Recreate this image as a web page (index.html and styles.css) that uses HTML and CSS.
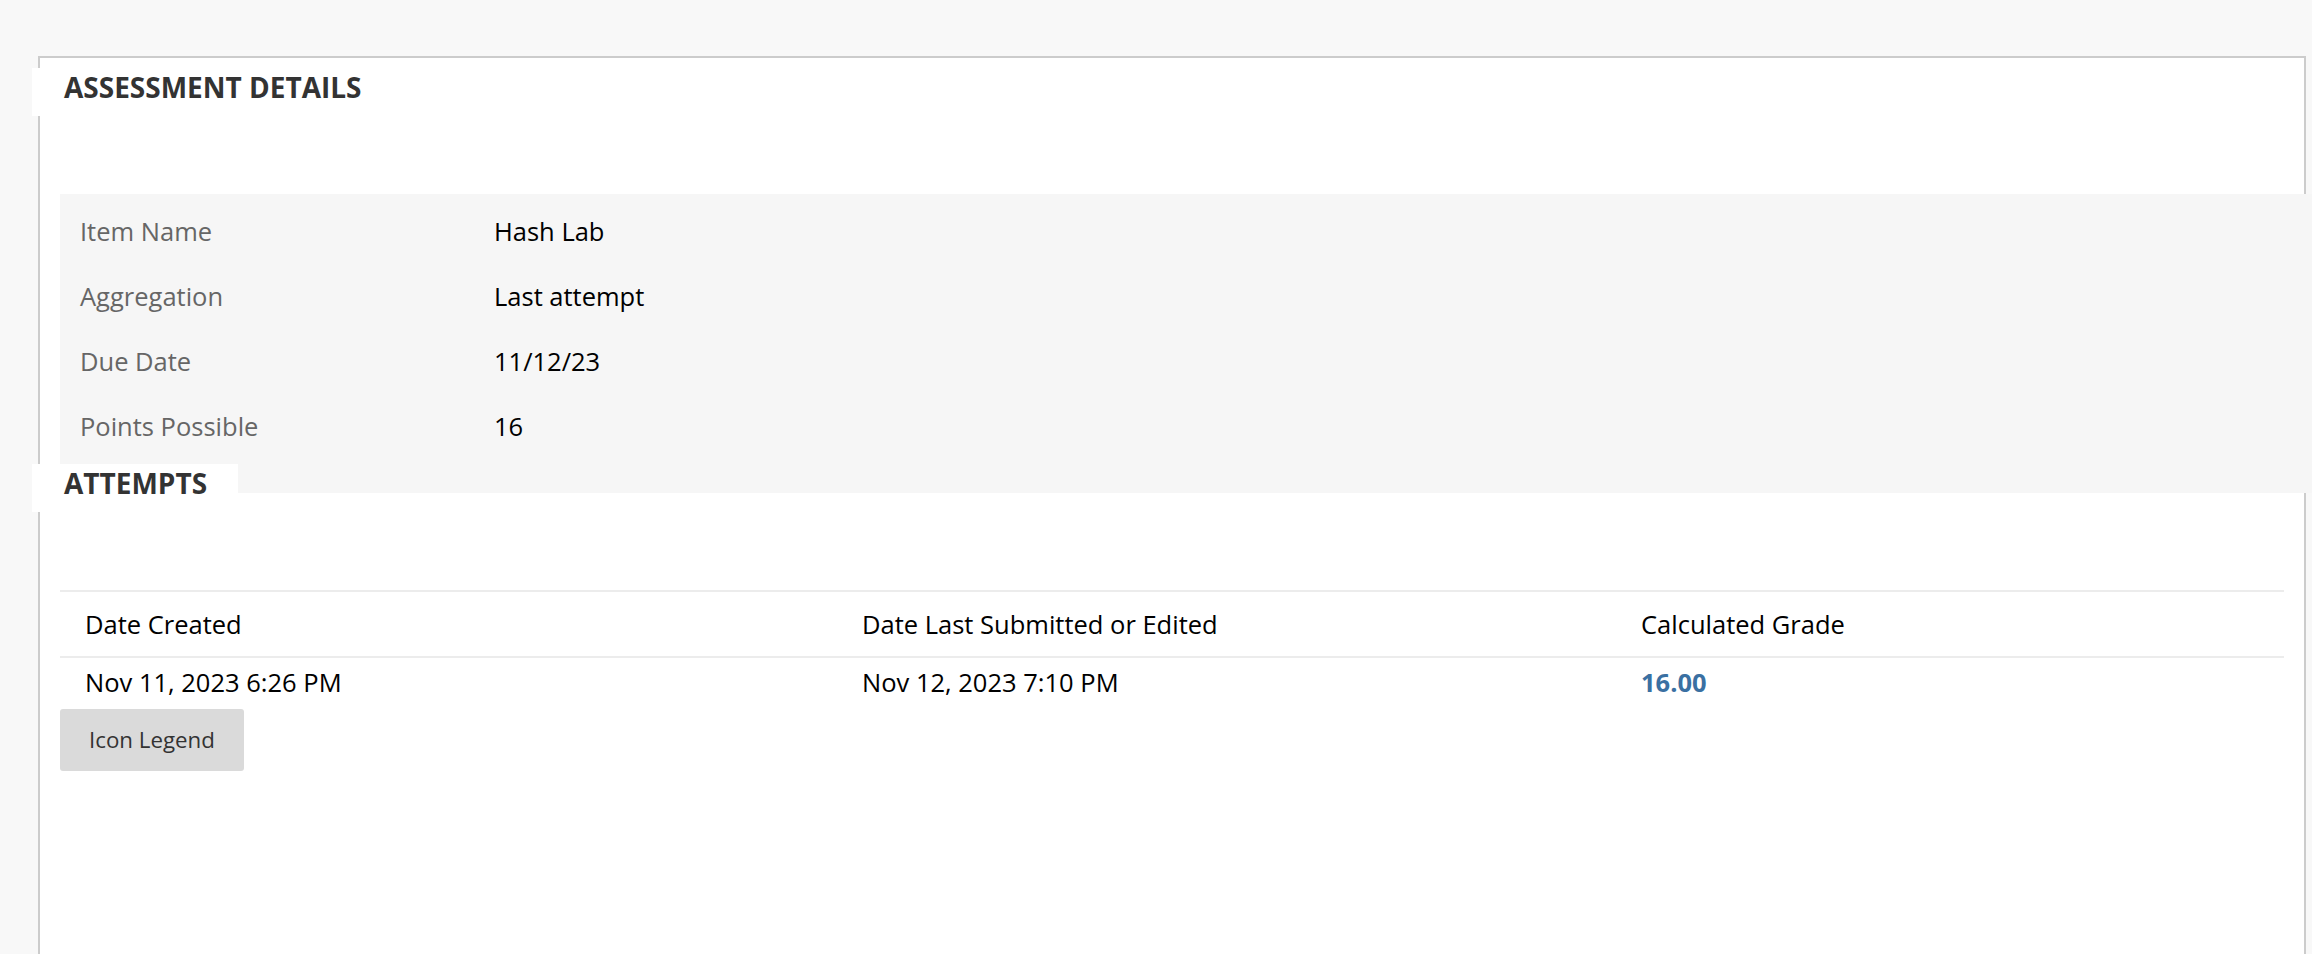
FILE: index.html
```html
<!DOCTYPE html>
<html lang="en">
<head>
<meta charset="utf-8">
<title>Assessment Details</title>
<link rel="stylesheet" href="styles.css">
</head>
<body>
<div class="page">
  <div class="panel">
    <h2 class="section-head">ASSESSMENT DETAILS</h2>
    <div class="details">
      <div class="detail-row"><div class="label">Item Name</div><div class="value">Hash Lab</div></div>
      <div class="detail-row"><div class="label">Aggregation</div><div class="value">Last attempt</div></div>
      <div class="detail-row"><div class="label">Due Date</div><div class="value">11/12/23</div></div>
      <div class="detail-row"><div class="label">Points Possible</div><div class="value">16</div></div>
    </div>
    <h2 class="section-head attempts-head">ATTEMPTS</h2>
    <table class="attempts">
      <thead>
        <tr><th class="c1">Date Created</th><th class="c2">Date Last Submitted or Edited</th><th class="c3">Calculated Grade</th></tr>
      </thead>
      <tbody>
        <tr><td>Nov 11, 2023 6:26 PM</td><td>Nov 12, 2023 7:10 PM</td><td><a class="grade" href="#">16.00</a></td></tr>
      </tbody>
    </table>
    <button class="legend-btn" type="button">Icon Legend</button>
  </div>
</div>
</body>
</html>
```
FILE: styles.css
```css
html, body {
  margin: 0;
  padding: 0;
  overflow: hidden;
  background: #f8f8f8;
  font-family: "Open Sans", "Noto Sans", "Liberation Sans", sans-serif;
}
.page {
  padding: 56px 6px 0 38px;
}
.panel {
  background: #fff;
  border: 2px solid #cccccc;
  min-height: 1000px;
  padding-top: 10px;
}
.section-head {
  display: inline-block;
  margin: 0 0 0 -8px;
  padding: 0 32px 10px 32px;
  background: #fff;
  color: #333;
  font-size: 28px;
  font-weight: 700;
  line-height: 38px;
  position: relative;
  z-index: 1;
}
.details {
  background: #f6f6f6;
  margin: 78px -20px 0 20px;
  padding: 4px 20px 35px 20px;
}
.detail-row {
  display: flex;
  height: 65px;
  align-items: center;
  font-size: 25.5px;
  line-height: 34px;
}
.label {
  width: 414px;
  color: #666;
}
.value {
  color: #000;
}
.attempts-head {
  display: block;
  width: 142px;
  margin-top: -29px;
}
.attempts {
  width: calc(100% - 40px);
  margin: 78px 20px 0 20px;
  border-collapse: collapse;
  table-layout: fixed;
  font-size: 25.5px;
  line-height: 34px;
  color: #000;
}
.attempts th {
  text-align: left;
  font-weight: 400;
  padding: 15px 25px 15px 25px;
  border-top: 2px solid #ececec;
  border-bottom: 2px solid #ececec;
}
.attempts .c1 { width: 727px; }
.attempts .c2 { width: 729px; }
.attempts td {
  padding: 7px 25px 10px 25px;
  white-space: nowrap;
}
.grade {
  color: #3a70a2;
  font-weight: 700;
  text-decoration: none;
}
.legend-btn {
  display: block;
  margin-left: 20px;
  height: 62px;
  padding: 0 29px 0 29px;
  background: #dadada;
  border: none;
  border-radius: 3px;
  color: #333;
  font-family: "Open Sans", "Noto Sans", "Liberation Sans", sans-serif;
  font-size: 22.3px;
  line-height: 30px;
}
```
